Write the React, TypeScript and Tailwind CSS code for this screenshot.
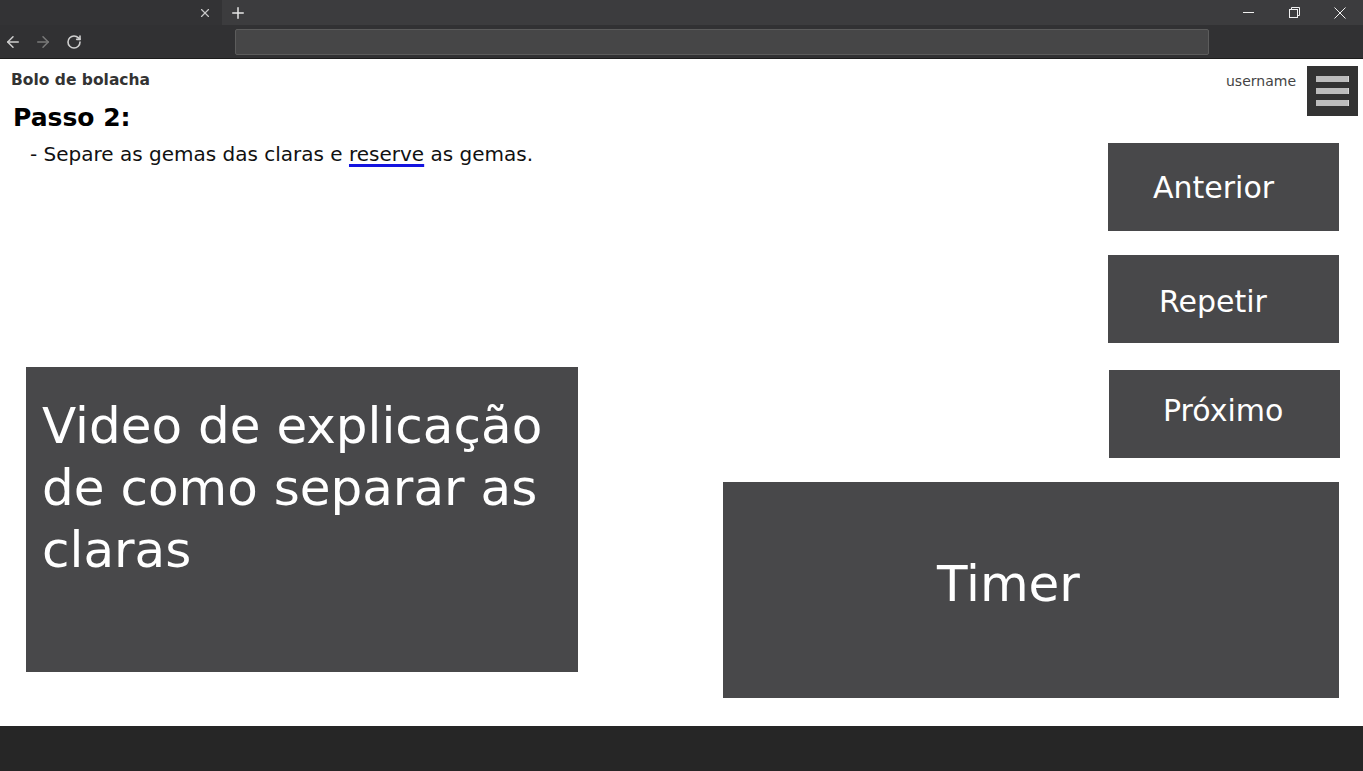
import { ArrowLeft, ArrowRight, RotateCw, X, Plus } from "lucide-react";

function BrowserChrome() {
  return (
    <div className="flex flex-col shrink-0">
      {/* tab strip */}
      <div className="h-[25px] flex flex-row bg-[#3c3c3e]">
        <div className="w-[222px] bg-[#333335] flex flex-row items-center justify-end pr-[10px]">
          <X size={14} strokeWidth={2} className="text-[#c8c8c8]" />
        </div>
        <div className="w-[32px] flex items-center justify-center">
          <Plus size={18} strokeWidth={2} className="text-[#e6e6e6]" />
        </div>
        <div className="flex-1" />
        <div className="flex flex-row items-center h-full">
          <div className="w-[46px] flex justify-center">
            <svg width="11" height="11" viewBox="0 0 11 11">
              <line x1="0" y1="5.5" x2="11" y2="5.5" stroke="#f0f0f0" strokeWidth="1" />
            </svg>
          </div>
          <div className="w-[46px] flex justify-center">
            <svg width="11" height="11" viewBox="0 0 11 11" fill="none" stroke="#f0f0f0" strokeWidth="1">
              <rect x="0.5" y="2.5" width="8" height="8" />
              <path d="M2.5 2.5 V0.5 H10.5 V8.5 H8.5" />
            </svg>
          </div>
          <div className="w-[46px] flex justify-center">
            <svg width="12" height="12" viewBox="0 0 12 12" stroke="#f0f0f0" strokeWidth="1">
              <line x1="0.5" y1="0.5" x2="11.5" y2="11.5" />
              <line x1="11.5" y1="0.5" x2="0.5" y2="11.5" />
            </svg>
          </div>
        </div>
      </div>
      {/* toolbar */}
      <div className="h-[34px] bg-[#313133] flex flex-row items-center border-b border-[#1c1c1c]">
        <div className="flex flex-row items-center gap-[12px] pl-[4px] w-[235px]">
          <ArrowLeft size={18} strokeWidth={2} className="text-[#cfcfcf]" />
          <ArrowRight size={18} strokeWidth={2} className="text-[#7a7a7a]" />
          <RotateCw size={16} strokeWidth={2.4} className="text-[#cfcfcf] ml-[2px]" />
        </div>
        <div className="w-[974px] h-[26px] bg-[#464647] border border-[#5c5c5c] rounded-[2px]" />
      </div>
    </div>
  );
}

function NavButton({ label, pad }: { label: string; pad: string }) {
  return (
    <div className={`w-[231px] h-[88px] bg-[#48484a] text-white text-[30px] flex items-center ${pad}`}>
      {label}
    </div>
  );
}

export default function App() {
  return (
    <div
      className="w-[1363px] h-[771px] flex flex-col bg-white overflow-hidden"
      style={{ fontFamily: '"DejaVu Sans", Verdana, sans-serif' }}
    >
      <BrowserChrome />

      <div className="flex-1 flex flex-row">
        {/* left column */}
        <div className="w-[600px] flex flex-col">
          <div className="ml-[11px] mt-[12px] text-[15.5px] leading-[18px] font-bold text-[#333]">
            Bolo de bolacha
          </div>
          <h1 className="ml-[13px] mt-[14px] text-[25px] leading-[30px] font-bold text-black">Passo 2:</h1>
          <p className="ml-[30px] mt-[9px] text-[20px] leading-[24px] text-[#111]">
            - Separe as gemas das claras e{" "}
            <span className="underline decoration-[#1414e0] decoration-[2.5px] underline-offset-[3px]">reserve</span> as
            gemas.
          </p>
          <div className="mt-auto mb-[54px] ml-[26px] w-[552px] h-[305px] bg-[#48484a] text-white text-[50px] leading-[62px] pt-[28px] pl-[16px] pr-[10px]">
            Video de explicação de como separar as claras
          </div>
        </div>

        {/* right column */}
        <div className="flex-1 flex flex-col items-end">
          <div className="flex flex-row items-start mt-[7px] mr-[5px]">
            <span className="text-[14px] text-[#444] mt-[5px] mr-[11px]">username</span>
            <div className="w-[51px] h-[50px] bg-[#333333] flex flex-col items-center justify-center gap-[6px]">
              <div className="w-[33px] h-[6px] bg-[#bdbdbd] border-r border-[#d8d8d8]" />
              <div className="w-[33px] h-[6px] bg-[#bdbdbd] border-r border-[#d8d8d8]" />
              <div className="w-[33px] h-[6px] bg-[#bdbdbd] border-r border-[#d8d8d8]" />
            </div>
          </div>

          <div className="mr-[24px] mt-[27px]">
            <NavButton label="Anterior" pad="pl-[45px]" />
          </div>
          <div className="mr-[24px] mt-[24px]">
            <NavButton label="Repetir" pad="pl-[51px] pt-[4px]" />
          </div>
          <div className="mr-[23px] mt-[27px]">
            <NavButton label="Próximo" pad="pl-[54px] pb-[8px]" />
          </div>

          <div className="mr-[24px] mt-[24px] w-[616px] h-[216px] bg-[#48484a] text-white text-[50px] flex items-center pl-[214px] pb-[12px]">
            Timer
          </div>
        </div>
      </div>

      <div className="h-[45px] bg-[#262626] shrink-0" />
    </div>
  );
}
